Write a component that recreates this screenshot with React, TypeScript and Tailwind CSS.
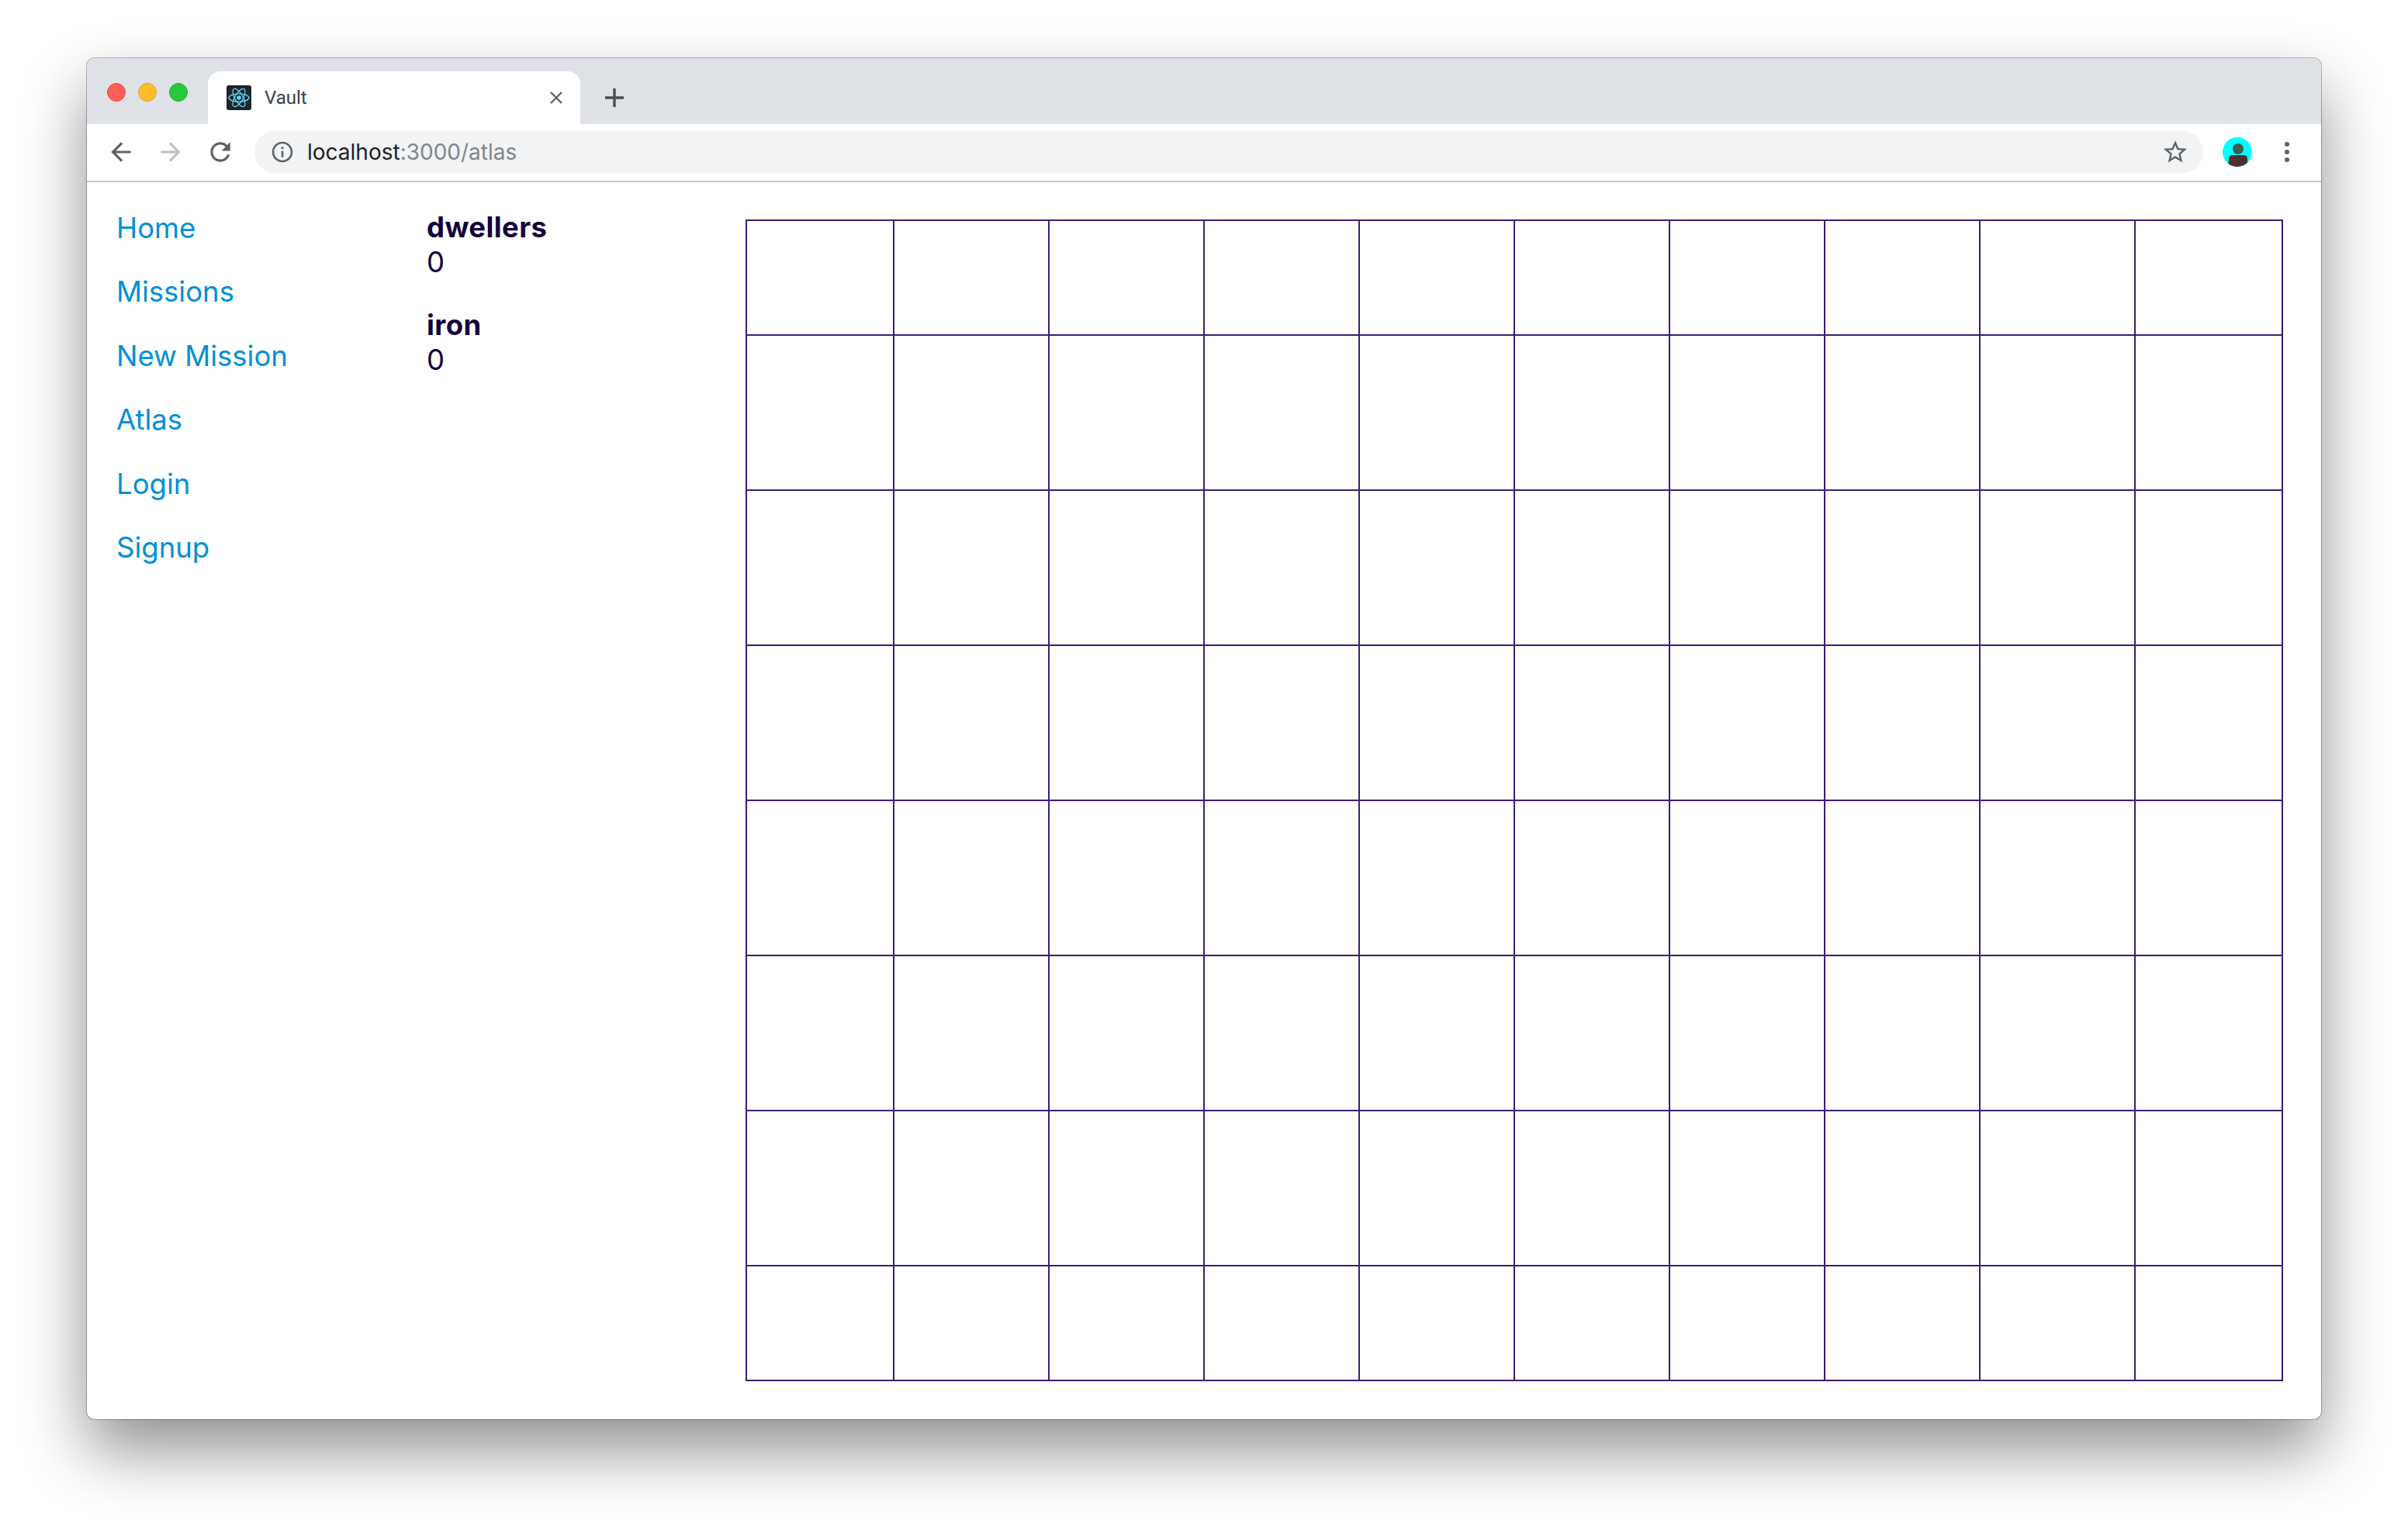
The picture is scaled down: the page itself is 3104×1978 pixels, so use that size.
const navLinks = ['Home', 'Missions', 'New Mission', 'Atlas', 'Login', 'Signup'];

const resources = [
  { name: 'dwellers', amount: 0 },
  { name: 'iron', amount: 0 },
];

const cells = Array.from({ length: 80 }, (_, i) => i);

const ReactIcon = () => (
  <svg viewBox="0 0 32 32" className="w-[32px] h-[32px] shrink-0">
    <rect width="32" height="32" rx="3" fill="#20232a" />
    <circle cx="16" cy="16" r="2.8" fill="#61dafb" />
    <g fill="none" stroke="#61dafb" strokeWidth="1.3">
      <ellipse cx="16" cy="16" rx="13" ry="5.2" />
      <ellipse cx="16" cy="16" rx="13" ry="5.2" transform="rotate(60 16 16)" />
      <ellipse cx="16" cy="16" rx="13" ry="5.2" transform="rotate(120 16 16)" />
    </g>
  </svg>
);

const Avatar = () => (
  <svg viewBox="0 0 38 38" className="w-[38px] h-[38px]">
    <defs>
      <clipPath id="avatar-clip">
        <circle cx="19" cy="19" r="19" />
      </clipPath>
    </defs>
    <g clipPath="url(#avatar-clip)">
      <rect width="38" height="38" fill="#00ffff" />
      <circle cx="20" cy="15" r="7" fill="#3e5a56" />
      <path d="M7 38 L8 28 Q8 23 13 23 L27 23 Q32 23 32 28 L32 38 Z" fill="#4e2e2e" />
    </g>
  </svg>
);

const App = () => {
  return (
    <div className="w-[3104px] h-[1978px] overflow-hidden bg-white pt-[75px] pl-[112px] font-['Inter',sans-serif]">
      <div className="w-[2880px] h-[1755px] rounded-[10px] overflow-hidden bg-white flex flex-col shadow-[0_0_0_1px_rgba(0,0,0,0.28),0_40px_84px_rgba(0,0,0,0.44)]">
        {/* tab strip */}
        <div className="h-[85px] shrink-0 bg-[#dee1e6] flex items-end">
          <div className="w-[156px] h-[85px] flex items-start pt-[32px] pl-[26px] gap-[16px]">
            <span className="w-[24px] h-[24px] rounded-full bg-[#ff5f57] border border-[#e5483f]" />
            <span className="w-[24px] h-[24px] rounded-full bg-[#ffbd2e] border border-[#e0a028]" />
            <span className="w-[24px] h-[24px] rounded-full bg-[#27c93f] border border-[#1fb032]" />
          </div>
          <div className="w-[480px] h-[68px] bg-white rounded-t-[16px] flex items-center pl-[24px] pr-[22px]">
            <ReactIcon />
            <span className="ml-[17px] text-[24px] text-[#3c4043] font-['Roboto',sans-serif]">Vault</span>
            <svg viewBox="0 0 18 18" className="ml-auto w-[18px] h-[18px]">
              <path d="M2 2 L16 16 M16 2 L2 16" stroke="#5f6368" strokeWidth="2.4" fill="none" />
            </svg>
          </div>
          <div className="h-[68px] flex items-center ml-[32px]">
            <svg viewBox="0 0 24 24" className="w-[24px] h-[24px]">
              <path d="M12 0 V24 M0 12 H24" stroke="#4a4d51" strokeWidth="3.4" fill="none" />
            </svg>
          </div>
        </div>

        {/* toolbar */}
        <div className="h-[75px] shrink-0 border-b-2 border-[#c4c4c6] flex items-center pb-[2px]">
          <div className="w-[216px] shrink-0 flex items-center pl-[25px] gap-[26px]">
            <svg viewBox="0 0 24 24" className="w-[38px] h-[38px]" fill="#5f6368">
              <path d="M20 11H7.83l5.59-5.59L12 4l-8 8 8 8 1.41-1.41L7.83 13H20v-2z" />
            </svg>
            <svg viewBox="0 0 24 24" className="w-[38px] h-[38px]" fill="#bdc1c6">
              <path d="M12 4l-1.41 1.41L16.17 11H4v2h12.17l-5.58 5.59L12 20l8-8z" />
            </svg>
            <svg viewBox="0 0 24 24" className="w-[38px] h-[38px]" fill="#5f6368">
              <path d="M17.65 6.35C16.2 4.9 14.21 4 12 4c-4.42 0-7.99 3.58-7.99 8s3.57 8 7.99 8c3.73 0 6.84-2.55 7.73-6h-2.08c-.82 2.33-3.04 4-5.65 4-3.31 0-6-2.69-6-6s2.69-6 6-6c1.66 0 3.14.69 4.22 1.78L13 11h7V4l-2.35 2.35z" />
            </svg>
          </div>
          <div className="w-[2512px] h-[56px] shrink-0 rounded-full bg-[#f1f3f4] flex items-center pl-[20px] pr-[18px]">
            <svg viewBox="0 0 24 24" className="w-[32px] h-[32px]" fill="#5f6368">
              <path d="M11 7h2v2h-2zm0 4h2v6h-2zm1-9C6.48 2 2 6.48 2 12s4.48 10 10 10 10-4.48 10-10S17.52 2 12 2zm0 18c-4.41 0-8-3.59-8-8s3.59-8 8-8 8 3.59 8 8-3.59 8-8 8z" />
            </svg>
            <span className="ml-[16px] text-[28px] text-[#202124]">
              localhost<span className="text-[#80868b]">:3000/atlas</span>
            </span>
            <svg viewBox="0 0 24 24" className="ml-auto w-[36px] h-[36px]" fill="#5f6368">
              <path d="M22 9.24l-7.19-.62L12 2 9.19 8.63 2 9.24l5.46 4.73L5.82 21 12 17.27 18.18 21l-1.63-7.03L22 9.24zM12 15.4l-3.76 2.27 1-4.28-3.32-2.88 4.38-.38L12 6.1l1.71 4.04 4.38.38-3.32 2.88 1 4.28L12 15.4z" />
            </svg>
          </div>
          <div className="ml-[25px] shrink-0">
            <Avatar />
          </div>
          <div className="ml-[42px] flex flex-col gap-[4px] shrink-0">
            <span className="w-[6px] h-[6px] rounded-full bg-[#5f6368]" />
            <span className="w-[6px] h-[6px] rounded-full bg-[#5f6368]" />
            <span className="w-[6px] h-[6px] rounded-full bg-[#5f6368]" />
          </div>
        </div>

        {/* page */}
        <div className="flex-1 flex items-start pt-[36px] pl-[38px]">
          <nav className="w-[400px] shrink-0 flex flex-col gap-[36px]">
            {navLinks.map((link) => (
              <a key={link} className="text-[36.5px] leading-[46.4px] text-[#0090d4]">
                {link}
              </a>
            ))}
          </nav>
          <div className="w-[411px] shrink-0 flex flex-col gap-[36px] text-[36.5px] leading-[45px] text-[#14003d]">
            {resources.map((r) => (
              <div key={r.name}>
                <div className="font-bold tracking-[0.4px]">{r.name}</div>
                <div>{r.amount}</div>
              </div>
            ))}
          </div>
          <div className="mt-[12px] grid grid-cols-[190px_repeat(8,200px)_190px] grid-rows-[148px_repeat(6,200px)_148px] border-t-2 border-l-2 border-[#3c1d75] w-[1982px] box-border">
            {cells.map((c) => (
              <div key={c} className="border-r-2 border-b-2 border-[#3c1d75]" />
            ))}
          </div>
        </div>
      </div>
    </div>
  );
};

export default App;
